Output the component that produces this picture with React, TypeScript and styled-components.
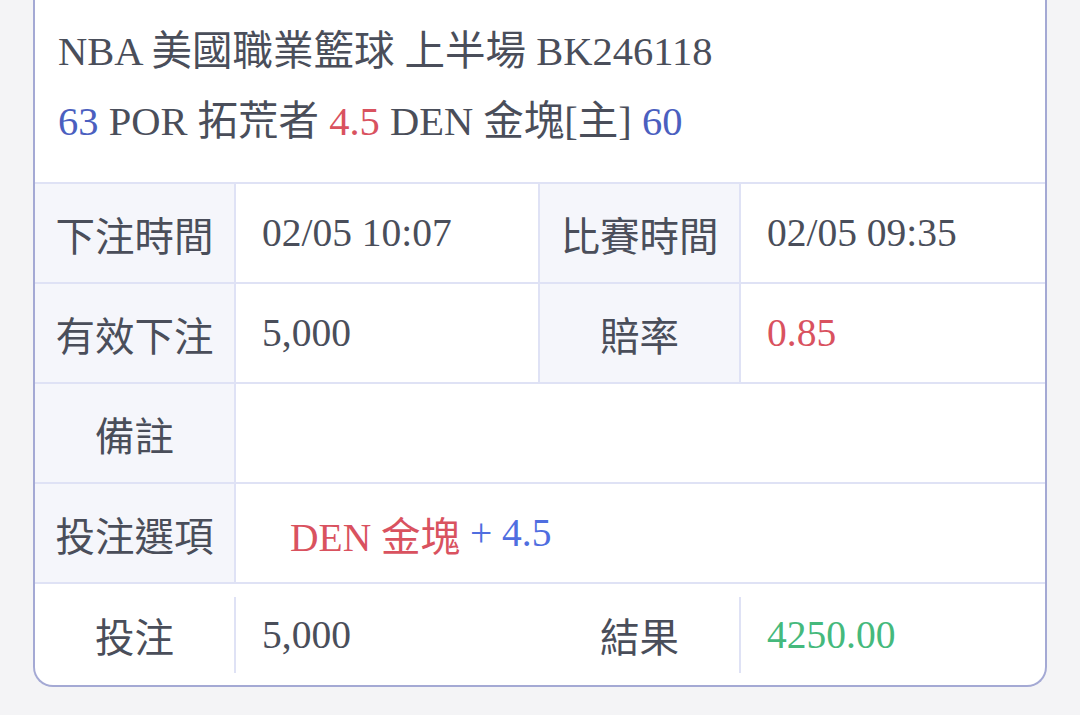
import styled, { createGlobalStyle } from "styled-components";

const GlobalStyle = createGlobalStyle`
  html, body {
    margin: 0;
    padding: 0;
    background: #f4f4f6;
  }
  body {
    font-family: "Liberation Serif", "Noto Sans CJK TC", serif;
    color: #4a4e5a;
  }
`;

const Page = styled.div`
  padding: 0 33px;
`;

const Card = styled.div`
  background: #ffffff;
  border: 2px solid #a4a9d4;
  border-top: none;
  border-radius: 0 0 20px 20px;
  overflow: hidden;
`;

const Header = styled.div`
  padding: 17px 23px 25px;
  border-bottom: 2px solid #dfe2f5;
  font-size: 40.5px;
  line-height: 70px;
`;

const Line = styled.div`
  white-space: nowrap;
`;

const Tone = styled.span<{ $c: "blue" | "red" | "bright" | "green" }>`
  color: ${(p) =>
    p.$c === "blue"
      ? "#4b5fbf"
      : p.$c === "red"
      ? "#d9525f"
      : p.$c === "bright"
      ? "#4f6ee0"
      : "#45b97c"};
`;

const Grid = styled.div`
  display: grid;
  grid-template-columns: 201px 1fr 201px 1fr;
`;

const Label = styled.div`
  box-sizing: border-box;
  height: 100px;
  display: flex;
  align-items: center;
  justify-content: center;
  background: #f5f6fb;
  border-right: 2px solid #dfe2f5;
  border-bottom: 2px solid #dfe2f5;
  font-family: "Noto Sans CJK TC", sans-serif;
  font-size: 39.5px;
`;

const Value = styled.div<{ $span?: number; $indent?: number; $last?: boolean }>`
  box-sizing: border-box;
  height: 100px;
  display: flex;
  align-items: center;
  padding-left: ${(p) => p.$indent ?? 26}px;
  grid-column: span ${(p) => p.$span ?? 1};
  border-right: ${(p) => (p.$last ? "none" : "2px solid #dfe2f5")};
  border-bottom: 2px solid #dfe2f5;
  font-size: 39.5px;
  white-space: nowrap;
`;

const BottomRow = styled.div`
  display: grid;
  grid-template-columns: 199px 2px 1fr 199px 2px 1fr;
  height: 101px;
  align-items: center;
`;

const BottomLabel = styled.div`
  display: flex;
  justify-content: center;
  font-family: "Noto Sans CJK TC", sans-serif;
  font-size: 39.5px;
`;

const BottomValue = styled.div`
  padding-left: 26px;
  font-size: 39.5px;
`;

const Divider = styled.div`
  width: 2px;
  height: 76px;
  background: #dfe2f5;
`;

export default function App() {
  return (
    <>
      <GlobalStyle />
      <Page>
        <Card>
          <Header>
            <Line>NBA 美國職業籃球 上半場 BK246118</Line>
            <Line>
              <Tone $c="blue">63</Tone> POR 拓荒者 <Tone $c="red">4.5</Tone> DEN 金塊[主]{" "}
              <Tone $c="blue">60</Tone>
            </Line>
          </Header>
          <Grid>
            <Label>下注時間</Label>
            <Value>02/05 10:07</Value>
            <Label>比賽時間</Label>
            <Value $last>02/05 09:35</Value>

            <Label>有效下注</Label>
            <Value>5,000</Value>
            <Label>賠率</Label>
            <Value $last>
              <Tone $c="red">0.85</Tone>
            </Value>

            <Label>備註</Label>
            <Value $span={3} $last />

            <Label>投注選項</Label>
            <Value $span={3} $last $indent={54}>
              <Tone $c="red">DEN 金塊</Tone>&nbsp;<Tone $c="bright">+ 4.5</Tone>
            </Value>
          </Grid>
          <BottomRow>
            <BottomLabel>投注</BottomLabel>
            <Divider />
            <BottomValue>5,000</BottomValue>
            <BottomLabel>結果</BottomLabel>
            <Divider />
            <BottomValue>
              <Tone $c="green">4250.00</Tone>
            </BottomValue>
          </BottomRow>
        </Card>
      </Page>
    </>
  );
}
